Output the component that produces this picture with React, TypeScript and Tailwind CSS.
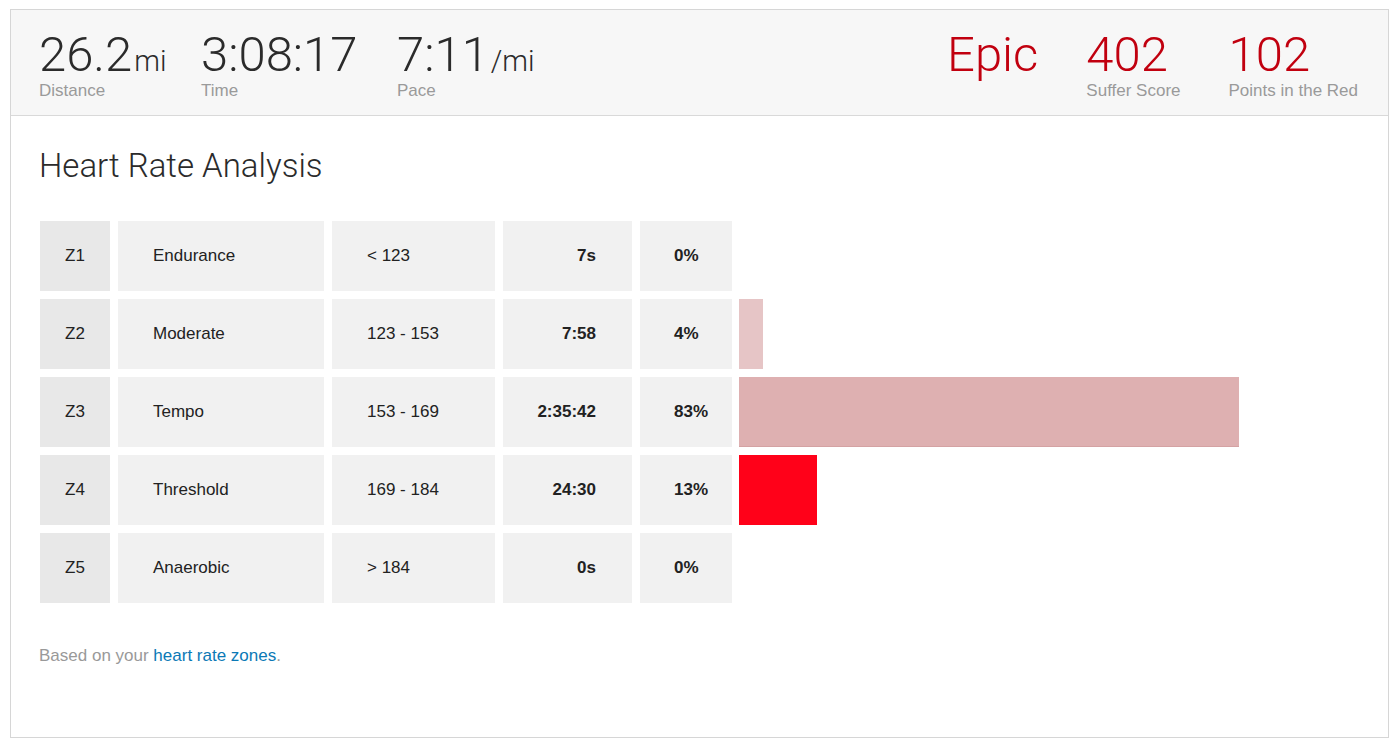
import React from 'react';

const zones = [
  { id: "Z1", name: "Endurance", range: "< 123", time: "7s", pct: 0, bar: "" },
  { id: "Z2", name: "Moderate", range: "123 - 153", time: "7:58", pct: 4, bar: "bg-[#e6c5c6]" },
  { id: "Z3", name: "Tempo", range: "153 - 169", time: "2:35:42", pct: 83, bar: "bg-[#deb0b1] border-b border-[#d4a2a3]" },
  { id: "Z4", name: "Threshold", range: "169 - 184", time: "24:30", pct: 13, bar: "bg-[#ff0119]" },
  { id: "Z5", name: "Anaerobic", range: "> 184", time: "0s", pct: 0, bar: "" },
];

const light = { fontFamily: 'Roboto, "Liberation Sans", sans-serif' };

const Stat = ({ value, unit, label, red, w }: { value: string; unit?: string; label?: string; red?: boolean; w?: string }) => (
  <div className={`flex flex-col ${w ?? ''}`}>
    <div className={`flex items-baseline h-[52px] ${red ? 'text-[#c1000f]' : 'text-[#2b2b2b]'}`}>
      <span className="text-[49px] leading-[52px] font-light" style={light}>{value}</span>
      {unit && <span className="text-[29px] leading-[30px] font-light ml-[2px]" style={light}>{unit}</span>}
    </div>
    {label && <span className="text-[17px] leading-[20px] text-[#9a9a9a]">{label}</span>}
  </div>
);

export default function App() {
  return (
    <div className="bg-white min-h-[746px] pt-[9px] px-[10px] font-['Liberation_Sans',Arial,sans-serif]">
      <div className="border border-[#d6d6d6] h-[729px] w-[1379px]">
        <div className="h-[106px] bg-[#f7f7f7] border-b border-[#d9d9d9] px-[28px] pt-[19px] flex justify-between">
          <div className="flex">
            <Stat value="26.2" unit="mi" label="Distance" w="w-[162px]" />
            <Stat value="3:08:17" label="Time" w="w-[196px]" />
            <Stat value="7:11" unit="/mi" label="Pace" />
          </div>
          <div className="flex gap-[48px] pr-[2px]">
            <Stat value="Epic" red />
            <Stat value="402" label="Suffer Score" red />
            <Stat value="102" label="Points in the Red" red />
          </div>
        </div>

        <div className="px-[28px] pt-[34px]">
          <h2 className="text-[33px] leading-[32px] font-light text-[#2b2b2b]" style={light}>Heart Rate Analysis</h2>

          <div className="mt-[39px] ml-[1px] flex flex-col gap-[8px]">
            {zones.map((z) => (
              <div key={z.id} className="flex h-[70px] text-[17px] text-[#222]">
                <div className="w-[70px] bg-[#e8e8e8] flex items-center justify-center">{z.id}</div>
                <div className="w-[206px] ml-[8px] bg-[#f1f1f1] flex items-center pl-[35px]">{z.name}</div>
                <div className="w-[163px] ml-[8px] bg-[#f1f1f1] flex items-center pl-[35px]">{z.range}</div>
                <div className="w-[129px] ml-[8px] bg-[#f1f1f1] flex items-center justify-end pr-[36px] font-bold">{z.time}</div>
                <div className="w-[92px] ml-[8px] bg-[#f1f1f1] flex items-center pl-[34px] font-bold">{z.pct}%</div>
                {z.pct > 0 && (
                  <div className={`ml-[7px] h-full ${z.bar}`} style={{ width: Math.round((z.pct / 83) * 500) }} />
                )}
              </div>
            ))}
          </div>

          <p className="mt-[43px] text-[17px] leading-[20px] text-[#999]">
            Based on your <a className="text-[#0b79b6]">heart rate zones</a>.
          </p>
        </div>
      </div>
    </div>
  );
}
